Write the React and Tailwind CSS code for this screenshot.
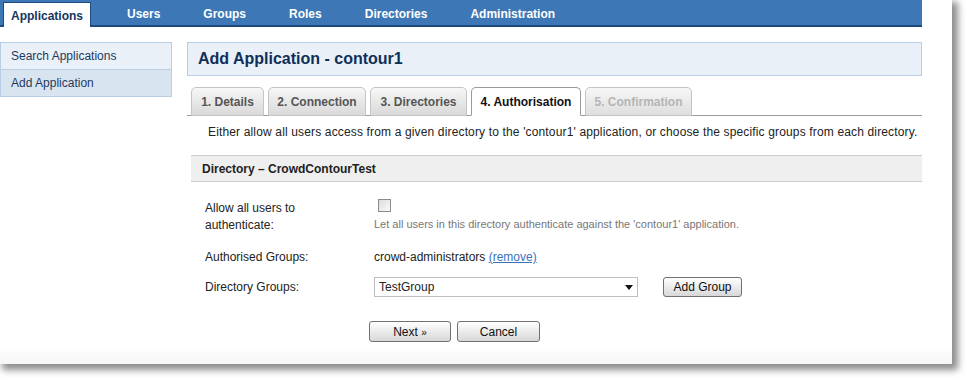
import React from 'react';

const navItems = ['Users', 'Groups', 'Roles', 'Directories', 'Administration'];

const tabs = [
  { label: '1. Details', w: 'w-[73px]' },
  { label: '2. Connection', w: 'w-[98px]' },
  { label: '3. Directories', w: 'w-[97px]' },
  { label: '4. Authorisation', w: 'w-[110px]', active: true },
  { label: '5. Confirmation', w: 'w-[107px]', disabled: true },
];

const App = () => {
  return (
    <div className="min-h-screen bg-white font-['Liberation_Sans',Arial,sans-serif] text-[12px] text-[#222]">
      <div className="w-[952px] h-[364px] bg-gradient-to-b from-white from-[95%] to-[#f6f6f6] shadow-[4px_4px_7px_2px_rgba(0,0,0,0.45)]">
        {/* top navigation */}
        <div className="w-[922px] h-[27px] bg-[#3d77b6] border-b-2 border-[#1b4a80] flex items-end">
          <div className="ml-[3px] w-[88px] h-[25px] -mb-[2px] bg-white border border-b-0 border-[#1b4a80] flex items-center justify-center pt-[2px] font-bold text-[#14365e]">
            Applications
          </div>
          <div className="ml-[36px] flex gap-[43px] h-full items-center pt-[3px] font-bold text-white">
            {navItems.map((item) => (
              <span key={item}>{item}</span>
            ))}
          </div>
        </div>

        <div className="flex items-start mt-[15px]">
          {/* sidebar */}
          <div className="w-[172px] border border-[#b9cde5] text-[#1d3a5e]">
            <div className="h-[27px] pl-[10px] flex items-center bg-[#eaf0f8] border-b border-[#b9cde5]">Search Applications</div>
            <div className="h-[26px] pl-[10px] flex items-center bg-[#d9e4f1]">Add Application</div>
          </div>

          {/* main */}
          <div className="ml-[15px] w-[735px]">
            <div className="h-[34px] bg-[#eaf0f8] border border-[#b9cde5] flex items-center pl-[10px] text-[16px] font-bold text-[#0e2f5a]">
              Add Application - contour1
            </div>

            <div className="mt-[10px] pl-[4px] flex gap-[4px] border-b border-[#9a9a9a] h-[30px] items-end">
              {tabs.map((t) => (
                <div
                  key={t.label}
                  className={`${t.w} h-[29px] -mb-px rounded-t-[5px] border flex items-center justify-center font-bold ${
                    t.active
                      ? 'bg-white border-[#9a9a9a] border-b-white text-[#111]'
                      : t.disabled
                      ? 'bg-gradient-to-b from-[#f7f7f7] to-[#dedede] border-[#c4c4c4] text-[#b5b5b5]'
                      : 'bg-gradient-to-b from-[#f7f7f7] to-[#d9d9d9] border-[#c4c4c4] text-[#555]'
                  }`}
                >
                  {t.label}
                </div>
              ))}
            </div>

            <div className="pl-[21px] mt-[8px] h-[16px] leading-[16px] tracking-[0.15px]">
              Either allow all users access from a given directory to the 'contour1' application, or choose the specific groups from each directory.
            </div>

            <div className="mt-[15px] ml-[4px] h-[27px] bg-[#efefef] border-y border-[#cccccc] flex items-center pl-[11px] font-bold">
              Directory – CrowdContourTest
            </div>

            {/* form */}
            <div className="ml-[18px] mt-[17px]">
              <div className="flex">
                <div className="w-[169px] pt-[1px] leading-[17px]">
                  Allow all users to<br />authenticate:
                </div>
                <div className="flex flex-col">
                  <div className="ml-[4px] w-[13px] h-[13px] border border-[#8a8a8a] bg-gradient-to-br from-[#dcdcdc] to-[#fafafa]"></div>
                  <div className="mt-[4px] text-[11px] text-[#777]">
                    Let all users in this directory authenticate against the 'contour1' application.
                  </div>
                </div>
              </div>

              <div className="flex mt-[15px] h-[16px] items-center">
                <div className="w-[169px]">Authorised Groups:</div>
                <div>
                  crowd-administrators <a className="text-[#3b73b9] underline cursor-pointer">(remove)</a>
                </div>
              </div>

              <div className="flex mt-[12px] items-center">
                <div className="w-[169px]">Directory Groups:</div>
                <div className="w-[264px] h-[20px] border border-[#bfbfbf] flex items-center justify-between pl-[4px] pr-[4px]">
                  <span>TestGroup</span>
                  <svg width="8" height="5" viewBox="0 0 8 5">
                    <path d="M0 0 L8 0 L4 5 Z" fill="#111" />
                  </svg>
                </div>
                <button className="ml-[25px] w-[79px] h-[20px] border border-[#707070] rounded-[3px] bg-gradient-to-b from-white to-[#d8d8d8] text-[12px] text-[#111]">
                  Add Group
                </button>
              </div>

              <div className="flex mt-[24px] ml-[164px] gap-[6px]">
                <button className="w-[82px] h-[21px] border border-[#707070] rounded-[3px] bg-gradient-to-b from-white to-[#d8d8d8] text-[12px] text-[#111]">
                  Next <span className="text-[10px]">»</span>
                </button>
                <button className="w-[83px] h-[21px] border border-[#707070] rounded-[3px] bg-gradient-to-b from-white to-[#d8d8d8] text-[12px] text-[#111]">
                  Cancel
                </button>
              </div>
            </div>
          </div>
        </div>
      </div>
    </div>
  );
};

export default App;
